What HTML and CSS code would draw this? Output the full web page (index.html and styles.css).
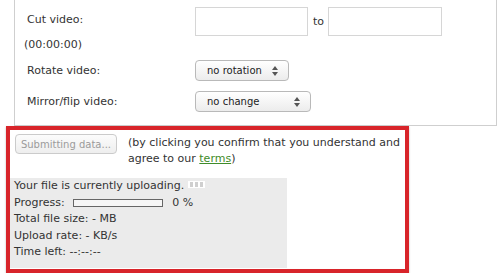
FILE: index.html
```html
<!DOCTYPE html>
<html lang="en">
<head>
    <meta charset="UTF-8">
    <title>Convert video</title>
    <link rel="stylesheet" href="styles.css">
</head>
<body>
    <div class="panel">
        <div class="row row-prev">
            <span class="label"></span>
            <input class="field" type="text">
        </div>
        <div class="row row-cut">
            <span class="label">Cut video:</span>
            <input class="field" type="text">
            <span class="to">to</span>
            <input class="field field-end" type="text">
        </div>
        <div class="hint">(00:00:00)</div>
        <div class="row row-rotate">
            <span class="label">Rotate video:</span>
            <div class="select select-rotate">
                <span>no rotation</span>
                <svg width="6" height="10" viewBox="0 0 6 10"><path d="M3 0 L6 4 L0 4 Z M0 6 L6 6 L3 10 Z" fill="#555"/></svg>
            </div>
        </div>
        <div class="row row-mirror">
            <span class="label">Mirror/flip video:</span>
            <div class="select select-mirror">
                <span>no change</span>
                <svg width="6" height="10" viewBox="0 0 6 10"><path d="M3 0 L6 4 L0 4 Z M0 6 L6 6 L3 10 Z" fill="#555"/></svg>
            </div>
        </div>
    </div>

    <div class="submit-box">
        <div class="submit-row">
            <button class="btn" disabled>Submitting data...</button>
            <p class="agree">(by clicking you confirm that you understand and<br>agree to our <a href="#">terms</a>)</p>
        </div>
        <div class="status">
            <div>Your file is currently uploading. <span class="loader"><i></i><i></i><i></i></span></div>
            <div>Progress: <span class="bar"></span>0 %</div>
            <div>Total file size: - MB</div>
            <div>Upload rate: - KB/s</div>
            <div>Time left: --:--:--</div>
        </div>
    </div>
</body>
</html>
```

FILE: styles.css
```css
* {
    margin: 0;
    padding: 0;
    box-sizing: border-box;
}

body {
    background: #fff;
    font-family: "DejaVu Sans", Verdana, sans-serif;
    font-size: 11px;
    color: #333;
    overflow: hidden;
}

.panel {
    margin: -29px 0 0 14px;
    width: 483px;
    border: 1px solid #cfcfcf;
    border-top: none;
    padding: 0 0 13px 12px;
}

.row {
    display: flex;
    align-items: center;
}

.label {
    width: 168px;
    line-height: 16px;
}

.field {
    width: 113px;
    height: 29px;
    border: 1px solid #d6d6d6;
    background: #fff;
}

.row-cut {
    margin-top: 7px;
}

.row-cut .label {
    align-self: flex-start;
    padding-top: 5px;
}

.to {
    margin: 0 4px 0 5px;
    line-height: 16px;
}

.field-end {
    width: 114px;
}

.hint {
    margin: 1px 0 0 -3px;
    line-height: 16px;
}

.row-rotate {
    margin-top: 7px;
}

.row-mirror {
    margin-top: 10px;
}

.select {
    display: flex;
    align-items: center;
    justify-content: space-between;
    height: 21px;
    padding: 0 10px 0 11px;
    border: 1px solid #b9b9b9;
    border-radius: 4px;
    background: linear-gradient(#ffffff, #ececec);
    font-size: 10px;
    color: #222;
}

.select-rotate {
    width: 94px;
}

.select-mirror {
    width: 116px;
}

.submit-box {
    margin-left: 6px;
    width: 403px;
    height: 147px;
    border: 4px solid #d8242a;
    padding-top: 4px;
    box-shadow: 0 1px 2px rgba(0, 0, 0, 0.25);
}

.submit-row {
    display: flex;
    align-items: flex-start;
    padding-left: 5px;
}

.btn {
    width: 102px;
    height: 20px;
    border: 1px solid #cbcbcb;
    border-radius: 4px;
    background: linear-gradient(#fcfcfc, #eeeeee);
    font-family: "DejaVu Sans", Verdana, sans-serif;
    font-size: 10px;
    color: #9b9b9b;
}

.agree {
    margin: 1px 0 0 11px;
    line-height: 16px;
    white-space: nowrap;
}

.agree a {
    color: #3f8c2a;
}

.status {
    margin-top: 11px;
    width: 277px;
    height: 90px;
    background: #ebebeb;
    padding-left: 4px;
    line-height: 16.5px;
}

.loader {
    display: inline-flex;
    gap: 2px;
    padding: 1px 2px;
    background: #fff;
    vertical-align: 2px;
}

.loader i {
    width: 3px;
    height: 5px;
    background: #cfcfcf;
}

.bar {
    display: inline-block;
    width: 90px;
    height: 8px;
    margin: 0 9px 0 5px;
    border: 1px solid #666;
    background: #f6f6f6;
    vertical-align: -1px;
}
```
